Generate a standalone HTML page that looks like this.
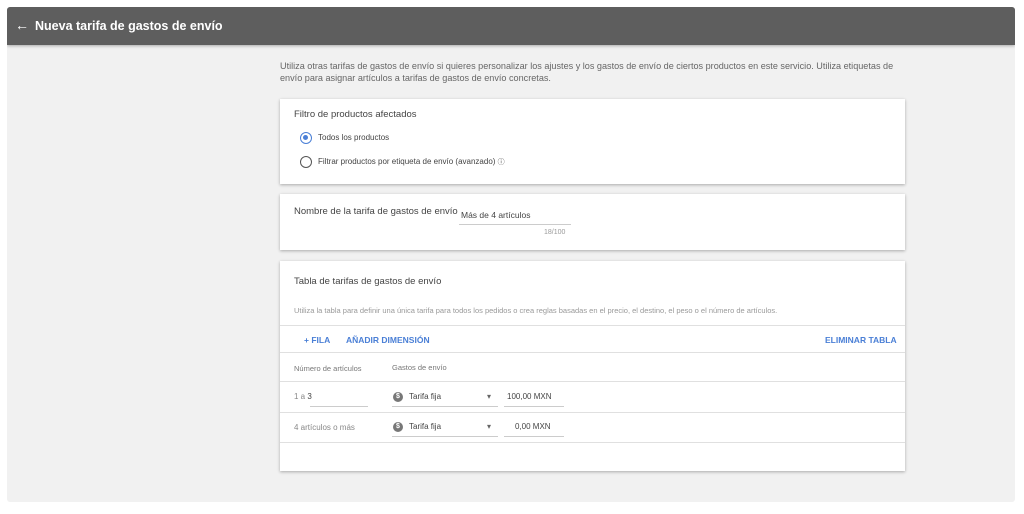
<!DOCTYPE html>
<html><head><meta charset="utf-8"><style>
*{box-sizing:border-box;margin:0;padding:0}
body{width:1024px;height:514px;background:#fff;font-family:"Liberation Sans",Arial,sans-serif;position:relative;overflow:hidden;color:#333}
.panel{position:absolute;left:7px;top:7px;width:1008px;height:495px;background:#f1f1f1;border-radius:3px;overflow:hidden}
.hdr{position:absolute;left:0;top:0;width:100%;height:38px;background:#5e5e5e;color:#fff;font-size:12.5px;font-weight:bold;box-shadow:0 1px 3px rgba(0,0,0,.3)}
.hdr span{position:absolute;left:28px;top:12px}
.hdr .ar{position:absolute;left:8px;top:10px;font-size:14px;font-weight:normal}
.t{position:absolute;font-size:9px;color:#444}
.card{position:absolute;left:273px;width:625px;background:#fff;box-shadow:0 1px 3px rgba(0,0,0,.3)}
.line{position:absolute;height:1px;background:#e0e0e0}
.u{position:absolute;height:1px;background:#ccc}
.blue{color:#4a7fd6;font-weight:bold;font-size:8.5px}
.radio{position:absolute;width:12px;height:12px;border-radius:50%;border:1.5px solid #555}
.dol{position:absolute;width:10px;height:10px;border-radius:50%;background:#777;color:#fff;font-size:7px;text-align:center;line-height:10px;font-weight:bold}
</style></head><body>
<div class="panel">
<div class="hdr"><span class="ar">←</span><span>Nueva tarifa de gastos de envío</span></div>
<div class="t" style="left:273px;top:53px;width:630px;line-height:12px;color:#666;font-size:9.1px">Utiliza otras tarifas de gastos de envío si quieres personalizar los ajustes y los gastos de envío de ciertos productos en este servicio. Utiliza etiquetas de envío para asignar artículos a tarifas de gastos de envío concretas.</div>
<div class="card" style="top:92px;height:85px">
 <div class="t" style="left:14px;top:10px;font-size:9.5px">Filtro de productos afectados</div>
 <div class="radio" style="left:20px;top:33px;border-color:#4a7fd6"><div style="position:absolute;left:2px;top:2px;width:5px;height:5px;border-radius:50%;background:#4a7fd6"></div></div>
 <div class="t" style="left:38px;top:34px;font-size:8px">Todos los productos</div>
 <div class="radio" style="left:20px;top:57px"></div>
 <div class="t" style="left:38px;top:58px;font-size:8px">Filtrar productos por etiqueta de envío (avanzado) <span style="font-size:7px">ⓘ</span></div>
</div>
<div class="card" style="top:187px;height:56px">
 <div class="t" style="left:14px;top:12px;font-size:9.5px">Nombre de la tarifa de gastos de envío</div>
 <div class="t" style="left:181px;top:16px;font-size:8.5px">Más de 4 artículos</div>
 <div class="u" style="left:179px;top:30px;width:112px"></div>
 <div class="t" style="left:264px;top:35px;font-size:7px;color:#999">18/100</div>
</div>
<div class="card" style="top:254px;height:210px">
 <div class="t" style="left:14px;top:15px;font-size:9.5px">Tabla de tarifas de gastos de envío</div>
 <div class="t" style="left:14px;top:45px;font-size:7.5px;color:#999">Utiliza la tabla para definir una única tarifa para todos los pedidos o crea reglas basadas en el precio, el destino, el peso o el número de artículos.</div>
 <div class="line" style="left:0;top:64px;width:625px"></div>
 <div class="t blue" style="left:24px;top:74px">+ FILA</div>
 <div class="t blue" style="left:66px;top:74px">AÑADIR DIMENSIÓN</div>
 <div class="t blue" style="left:545px;top:74px">ELIMINAR TABLA</div>
 <div class="line" style="left:0;top:91px;width:625px"></div>
 <div class="t" style="left:14px;top:103px;font-size:7.5px;color:#777">Número de artículos</div>
 <div class="t" style="left:112px;top:102px;font-size:7.5px;color:#777">Gastos de envío</div>
 <div class="line" style="left:0;top:120px;width:625px"></div>
 <div class="t" style="left:14px;top:131px;font-size:8px;color:#888">1 a <span style="color:#444">3</span></div>
 <div class="u" style="left:30px;top:145px;width:58px"></div>
 <div class="dol" style="left:113px;top:131px">$</div>
 <div class="t" style="left:129px;top:131px;font-size:8px">Tarifa fija</div>
 <div class="t" style="left:207px;top:131px;font-size:8px;color:#666">▾</div>
 <div class="u" style="left:112px;top:145px;width:106px"></div>
 <div class="t" style="left:227px;top:131px;font-size:8px">100,00 MXN</div>
 <div class="u" style="left:224px;top:145px;width:60px"></div>
 <div class="line" style="left:0;top:151px;width:625px"></div>
 <div class="t" style="left:14px;top:162px;font-size:8px;color:#888">4 artículos o más</div>
 <div class="dol" style="left:113px;top:161px">$</div>
 <div class="t" style="left:129px;top:161px;font-size:8px">Tarifa fija</div>
 <div class="t" style="left:207px;top:161px;font-size:8px;color:#666">▾</div>
 <div class="u" style="left:112px;top:175px;width:106px"></div>
 <div class="t" style="left:235px;top:161px;font-size:8px">0,00 MXN</div>
 <div class="u" style="left:224px;top:175px;width:60px"></div>
 <div class="line" style="left:0;top:181px;width:625px"></div>
</div>
</div>
</body></html>
